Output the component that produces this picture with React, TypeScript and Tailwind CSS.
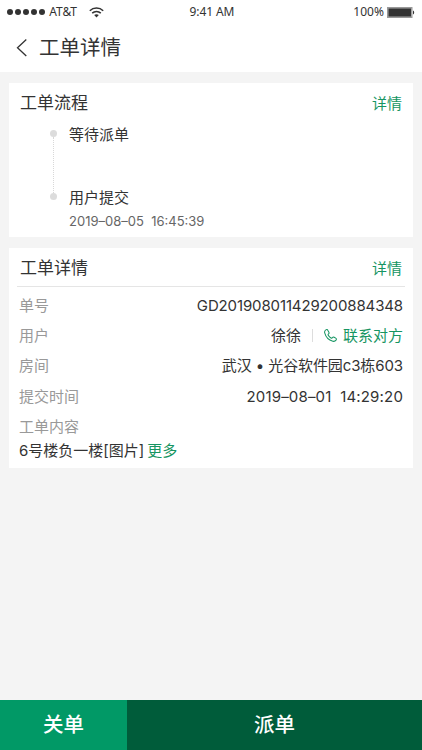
import type { ReactNode } from 'react'

const steps = [
    { title: '等待派单', time: '' },
    { title: '用户提交', time: '2019–08–05\u00a0 16:45:39' },
]

function StatusBar() {
    return (
        <div className="grid h-6 grid-cols-3 items-center pl-[7px] pr-[7px] font-['Noto_Sans','Noto_Sans_CJK_SC',sans-serif] text-[12px] text-[#333]">
            <div className="flex items-center">
                <div className="mr-1 flex gap-[1.6px]">
                    {[0, 1, 2, 3, 4].map((dot) => (
                        <span key={dot} className="h-[6.4px] w-[6.4px] rounded-full bg-[#333]" />
                    ))}
                </div>
                <span className="tracking-[-0.1px]">AT&amp;T</span>
                <svg className="ml-[12px] h-[11px] w-[15px]" viewBox="0 0 15 11" fill="none" stroke="#333" strokeWidth="1.5">
                    <path d="M.8 3.7C4.5.1 10.5.1 14.2 3.7M3.2 6.1c2.4-2.3 6.2-2.3 8.6 0" />
                    <path d="M5.2 8.1c1.3-1.2 3.3-1.2 4.6 0L7.5 10.500z" fill="#333" stroke="none" />
                </svg>
            </div>
            <span className="pl-[2px] text-center tracking-[-0.1px]">9:41 AM</span>
            <div className="flex items-center justify-end gap-[3px]">
                <span className="tracking-[0.05px]">100%</span>
                <svg className="h-[11px] w-[28px]" viewBox="0 0 28 11">
                    <rect x=".5" y=".5" width="24.5" height="10" fill="#aaa" stroke="#999" />
                    <rect x="1.5" y="1.5" width="22.5" height="8" fill="#333" />
                    <path d="M26 3.5c1.6.5 1.6 3.5 0 4z" fill="#333" />
                </svg>
            </div>
        </div>
    )
}

function CardHeader({ title }: { title: string }) {
    return (
        <div className="flex h-[38px] items-center justify-between pl-[11px] pr-[11px]">
            <h2 className="pt-[2px] text-[17px] text-[#333]">{title}</h2>
            <button className="pt-[3px] text-[15px] text-[#169562]">详情</button>
        </div>
    )
}

function Row({ label, children }: { label: string; children?: ReactNode }) {
    return (
        <div className="flex h-[30.4px] items-center justify-between pl-[10px] pr-[10px]">
            <span className="text-[#999]">{label}</span>
            <div className="flex items-center">{children}</div>
        </div>
    )
}

export default function App() {
    return (
        <div className="flex h-[750px] w-[422px] flex-col bg-[#f4f4f4] font-['Inter','Noto_Sans_CJK_SC',sans-serif] text-[15px] leading-none text-[#333]">
            <header className="h-[72px] bg-white">
                <StatusBar />
                <div className="flex h-[48px] items-center pl-4">
                    <svg className="mr-[12px] h-[18px] w-[11px]" viewBox="0 0 11 18" fill="none" stroke="#333" strokeWidth="1.3">
                        <path d="M10.300.5 1.500 8.800l8.800 8.200" />
                    </svg>
                    <h1 className="text-[20.5px]">工单详情</h1>
                </div>
            </header>

            <main className="flex flex-1 flex-col gap-[11px] px-[9px] pt-[11px]">
                {/* Progress */}
                <section className="h-[154px] bg-white">
                    <CardHeader title="工单流程" />
                    <div className="flex flex-col pl-[41px] pt-[6px]">
                        {steps.map((step, i) => (
                            <div key={step.title} className="flex h-[63px]">
                                <div className="flex w-[7px] flex-col items-center pt-[3px]">
                                    <span className="h-[7px] w-[7px] shrink-0 rounded-full bg-[#dcdcdc]" />
                                    {i < steps.length - 1 && <span className="-mb-[3px] flex-1 border-l border-dotted border-[#d8d8d8]" />}
                                </div>
                                <div className="ml-[12px]">
                                    <p>{step.title}</p>
                                    <p className="mt-[10px] text-[13px] text-[#666]">{step.time}</p>
                                </div>
                            </div>
                        ))}
                    </div>
                </section>

                {/* Order details */}
                <section className="h-[220px] bg-white">
                    <CardHeader title="工单详情" />
                    <div className="mx-2 mb-[3px] h-px bg-[#e5e5e5]" />
                    <Row label="单号"><span className="tracking-[-0.13px]">GD201908011429200884348</span></Row>
                    <Row label="用户">
                        <span>徐徐</span>
                        <span className="mx-[11px] h-[13px] w-px bg-[#ddd]" />
                        <svg className="mr-[6px] h-[13px] w-[13px]" viewBox="0 0 24 24" fill="none" stroke="#169562" strokeWidth="1.9" strokeLinejoin="round">
                            <path d="M7 2.500 9 6c.7 1.200.3 2.200-.6 2.900-1.200.9-1.200 1.700-.4 2.900 1.300 2 2.900 3.600 4.900 4.700 1.200.7 1.900.5 2.700-.6.8-1.200 2-1.400 3.200-.7l2.800 1.700c1.500.9 1.700 2.200.6 3.600-1.400 1.900-3.600 2.700-5.900 2.100C9.500 20.700 3.100 14.200 1.300 7.200.7 4.900 1.500 2.900 3.400 1.600 4.900.6 6.200 1 7 2.500z" />
                        </svg>
                        <span className="text-[#169562]">联系对方</span>
                    </Row>
                    <Row label="房间"><span className="tracking-[-0.1px]">武汉 • 光谷软件园c3栋603</span></Row>
                    <Row label="提交时间"><span className="tracking-[0.16px]">2019–08–01&nbsp; 14:29:20</span></Row>
                    <Row label="工单内容" />
                    <p className="pl-[10px] pt-px">
                        6号楼负一楼[图片]<span className="ml-[3px] text-[#169562]">更多</span>
                    </p>
                </section>
            </main>

            <footer className="flex h-[50px] text-[20.5px] font-medium text-white">
                <button className="w-[127px] bg-[#019966] pt-px">关单</button>
                <button className="flex-1 bg-[#005c3a] pt-px">派单</button>
            </footer>
        </div>
    )
}
